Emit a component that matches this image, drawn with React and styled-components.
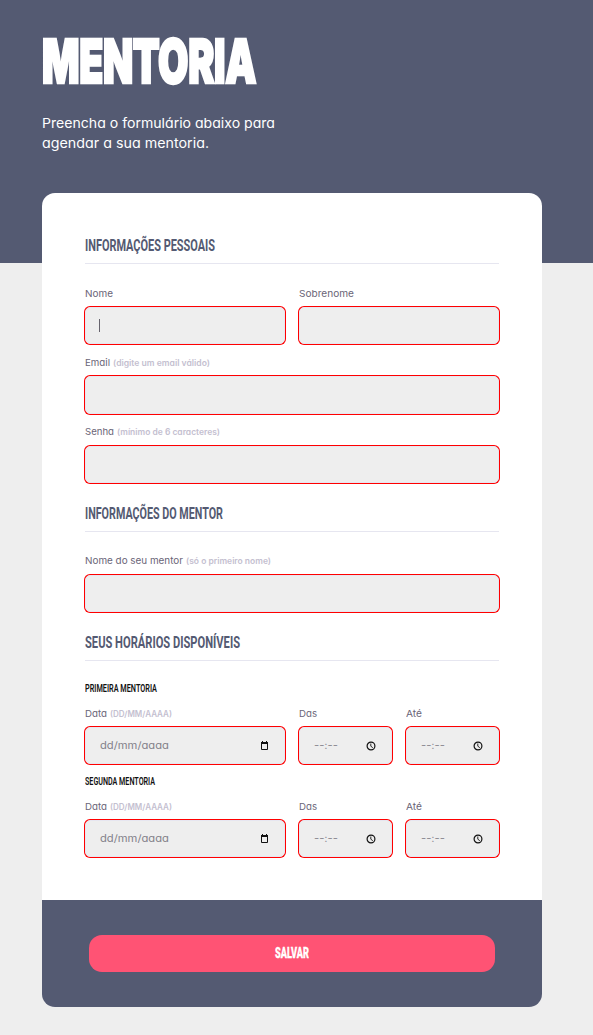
import React, { useLayoutEffect, useRef } from "react";
import styled, { createGlobalStyle } from "styled-components";

const GlobalStyle = createGlobalStyle`
  * { box-sizing: border-box; }
  body {
    margin: 0;
    background: #eeeeee;
    font-family: Inter, "Open Sans", sans-serif;
    font-feature-settings: "cv11";
  }
`;

const FitBox = styled.span`
  display: inline-block;
  white-space: nowrap;
  line-height: inherit;
`;

const FitInner = styled.span`
  display: inline-block;
  transform-origin: 0 50%;
`;

/* Condenses or widens a line of text to a set width. */
function Fit({ width, children }) {
  const outer = useRef(null);
  const inner = useRef(null);
  useLayoutEffect(() => {
    inner.current.style.transform = "none";
    outer.current.style.width = "auto";
    const natural = inner.current.getBoundingClientRect().width;
    inner.current.style.transform = `scaleX(${width / natural})`;
    outer.current.style.width = `${width}px`;
  }, [width, children]);
  return (
    <FitBox ref={outer}>
      <FitInner ref={inner}>{children}</FitInner>
    </FitBox>
  );
}

const Page = styled.div`
  height: 1035px;
  background: linear-gradient(#545a72 263px, #eeeeee 263px);
`;

const Header = styled.header`
  height: 193px;
  padding: 27px 42px 0;
  color: #ffffff;
`;

const Title = styled.h1`
  margin: 0;
  height: 86px;
  font-size: 60.5px;
  font-weight: 900;
  line-height: 68px;
  letter-spacing: -0.5px;
  -webkit-text-stroke: 2.6px #ffffff;
`;

const Intro = styled.p`
  margin: 0;
  display: flex;
  flex-direction: column;
  font-size: 13.6px;
  line-height: 20px;
`;

const Card = styled.main`
  width: 500px;
  margin-left: 42px;
  border-radius: 13px;
  background: #ffffff;
  overflow: hidden;
`;

const Form = styled.div`
  height: 707px;
  padding: 29px 43px 0;
`;

const SectionTitle = styled.h2`
  margin: 0;
  height: ${(p) => (p.$first ? 42 : 49)}px;
  padding-top: ${(p) => (p.$first ? 14 : 21)}px;
  border-bottom: 1px solid #e6e6f0;
  color: #545a72;
  font-family: Roboto, sans-serif;
  font-size: 15.8px;
  font-weight: 700;
  line-height: 20px;
`;

const SlotTitle = styled.h3`
  margin: ${(p) => p.$top}px 0 0;
  height: 14px;
  color: #111111;
  font-family: Roboto, sans-serif;
  font-size: 11.4px;
  font-weight: 600;
  line-height: 14px;
`;

const Row = styled.div`
  display: grid;
  grid-template-columns: ${(p) => p.$columns || "1fr"};
  column-gap: 14px;
  padding-top: ${(p) => p.$top || 12}px;
`;

const Label = styled.div`
  display: flex;
  align-items: baseline;
  gap: 2.5px;
  height: 14px;
  margin-bottom: ${(p) => p.$gap || 6}px;
  color: #6a6577;
  font-size: 9.4px;
  line-height: 14px;
`;

const Hint = styled.span`
  color: #c4c0d0;
  font-size: 8.4px;
  font-weight: 600;
`;

const Input = styled.div`
  display: flex;
  align-items: center;
  justify-content: space-between;
  height: ${(p) => p.$height || 37}px;
  padding: 0 15px 0 14px;
  border: 1px solid #e6e6f0;
  border-radius: 5px;
  background: #eeeeee;
  box-shadow: 0 0 0 1px #ff0000;
  color: #83818a;
  font-size: 10.2px;
  line-height: 17px;
`;

const Caret = styled.i`
  width: 1px;
  height: 13px;
  margin-left: -1px;
  background: #66636d;
`;

const Footer = styled.footer`
  height: 107px;
  padding: 35px 47px;
  background: #545a72;
`;

const SaveButton = styled.button`
  display: block;
  width: 100%;
  height: 37px;
  padding: 0;
  border: 0;
  border-radius: 13px;
  background: #ff5374;
  color: #ffffff;
  font-family: Roboto, sans-serif;
  font-size: 14.3px;
  font-weight: 900;
  line-height: 37px;
  -webkit-text-stroke: 0.3px #ffffff;
`;

const IconSvg = styled.svg`
  display: block;
  flex: none;
`;

function CalendarIcon() {
  return (
    <IconSvg width="9" height="10" viewBox="0 0 9 10">
      <path d="M1.5 2v6.5h6V2z" fill="none" stroke="#111" />
      <path d="M1 1h7v2H1zM2 0h1v1H2zM6 0h1v1H6z" fill="#111" />
    </IconSvg>
  );
}

function ClockIcon() {
  return (
    <IconSvg width="10" height="10" viewBox="0 0 10 10">
      <circle cx="5" cy="5" r="3.9" fill="none" stroke="#111" strokeWidth="1.2" />
      <path d="M4.8 2.5v2.7l2 1.5" fill="none" stroke="#111" strokeWidth="0.9" />
    </IconSvg>
  );
}

function Field({ label, width, hint, hintWidth, height, gap, children }) {
  return (
    <div>
      <Label $gap={gap}>
        <Fit width={width}>{label}</Fit>
        {hint && (
          <Hint>
            <Fit width={hintWidth}>{hint}</Fit>
          </Hint>
        )}
      </Label>
      <Input $height={height}>{children}</Input>
    </div>
  );
}

function TimeField({ label, width }) {
  return (
    <Field label={label} width={width}>
      <Fit width={24}>--:--</Fit>
      <ClockIcon />
    </Field>
  );
}

function Slot({ title, width, top }) {
  return (
    <>
      <SlotTitle $top={top}>
        <Fit width={width}>{title}</Fit>
      </SlotTitle>
      <Row $columns="200px 93px 93px">
        <Field label="Data" width={22} hint="(DD/MM/AAAA)" hintWidth={62}>
          <Fit width={69}>dd/mm/aaaa</Fit>
          <CalendarIcon />
        </Field>
        <TimeField label="Das" width={18} />
        <TimeField label="Até" width={16} />
      </Row>
    </>
  );
}

export default function App() {
  return (
    <Page>
      <GlobalStyle />
      <Header>
        <Title>
          <Fit width={214}>MENTORIA</Fit>
        </Title>
        <Intro>
          <Fit width={233}>Preencha o formulário abaixo para</Fit>
          <Fit width={167}>agendar a sua mentoria.</Fit>
        </Intro>
      </Header>
      <Card>
        <Form>
          <SectionTitle $first>
            <Fit width={130}>INFORMAÇÕES PESSOAIS</Fit>
          </SectionTitle>
          <Row $columns="200px 200px" $top={23}>
            <Field label="Nome" width={28}>
              <Caret />
            </Field>
            <Field label="Sobrenome" width={55} />
          </Row>
          <Row>
            <Field label="Email" width={25} hint="(digite um email válido)" hintWidth={97} height={38} />
          </Row>
          <Row $top={11}>
            <Field label="Senha" width={29} hint="(mínimo de 6 caracteres)" hintWidth={103} gap={7} />
          </Row>

          <SectionTitle>
            <Fit width={138}>INFORMAÇÕES DO MENTOR</Fit>
          </SectionTitle>
          <Row $top={22}>
            <Field label="Nome do seu mentor" width={98} hint="(só o primeiro nome)" hintWidth={85} gap={7} />
          </Row>

          <SectionTitle>
            <Fit width={155}>SEUS HORÁRIOS DISPONÍVEIS</Fit>
          </SectionTitle>
          <Slot title="PRIMEIRA MENTORIA" width={72} top={20} />
          <Slot title="SEGUNDA MENTORIA" width={70} top={10} />
        </Form>
        <Footer>
          <SaveButton>
            <Fit width={34}>SALVAR</Fit>
          </SaveButton>
        </Footer>
      </Card>
    </Page>
  );
}
